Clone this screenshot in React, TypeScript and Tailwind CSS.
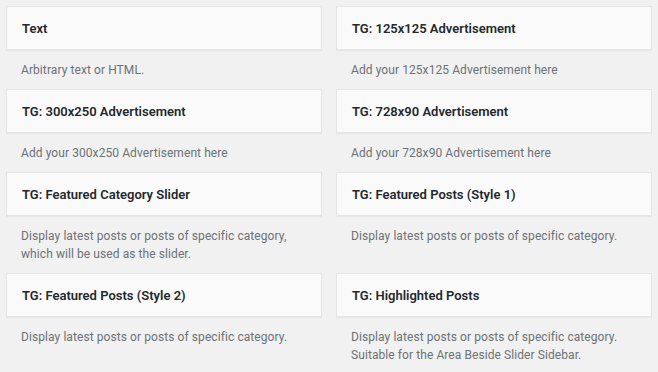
const widgets = [
  { title: 'Text', desc: ['Arbitrary text or HTML.'] },
  { title: 'TG: 125x125 Advertisement', desc: ['Add your 125x125 Advertisement here'] },
  { title: 'TG: 300x250 Advertisement', desc: ['Add your 300x250 Advertisement here'] },
  { title: 'TG: 728x90 Advertisement', desc: ['Add your 728x90 Advertisement here'] },
  {
    title: 'TG: Featured Category Slider',
    desc: ['Display latest posts or posts of specific category,', 'which will be used as the slider.'],
  },
  { title: 'TG: Featured Posts (Style 1)', desc: ['Display latest posts or posts of specific category.'] },
  { title: 'TG: Featured Posts (Style 2)', desc: ['Display latest posts or posts of specific category.'] },
  {
    title: 'TG: Highlighted Posts',
    desc: ['Display latest posts or posts of specific category.', 'Suitable for the Area Beside Slider Sidebar.'],
  },
];

export default function App() {
  return (
    <div className="w-[658px] h-[372px] overflow-hidden bg-[#f1f1f1] px-[6px] pt-[6px] font-['Roboto',sans-serif]">
      <div className="grid grid-cols-2 gap-x-[14px]">
        {widgets.map((w) => (
          <div key={w.title}>
            <div className="h-[44px] flex items-center pt-[1px] px-[15px] bg-[#fafafa] border border-[#e5e5e5] shadow-[0_1px_1px_rgba(0,0,0,0.04)]">
              <h3 className="text-[13px] font-semibold text-[#23282d]">{w.title}</h3>
            </div>
            <div className="pt-[11px] pb-[10px] px-[15px] text-[12px] tracking-[0.08px] leading-[18px] text-[#6c7176]">
              {w.desc.map((line) => (
                <div key={line}>{line}</div>
              ))}
            </div>
          </div>
        ))}
      </div>
    </div>
  );
}
